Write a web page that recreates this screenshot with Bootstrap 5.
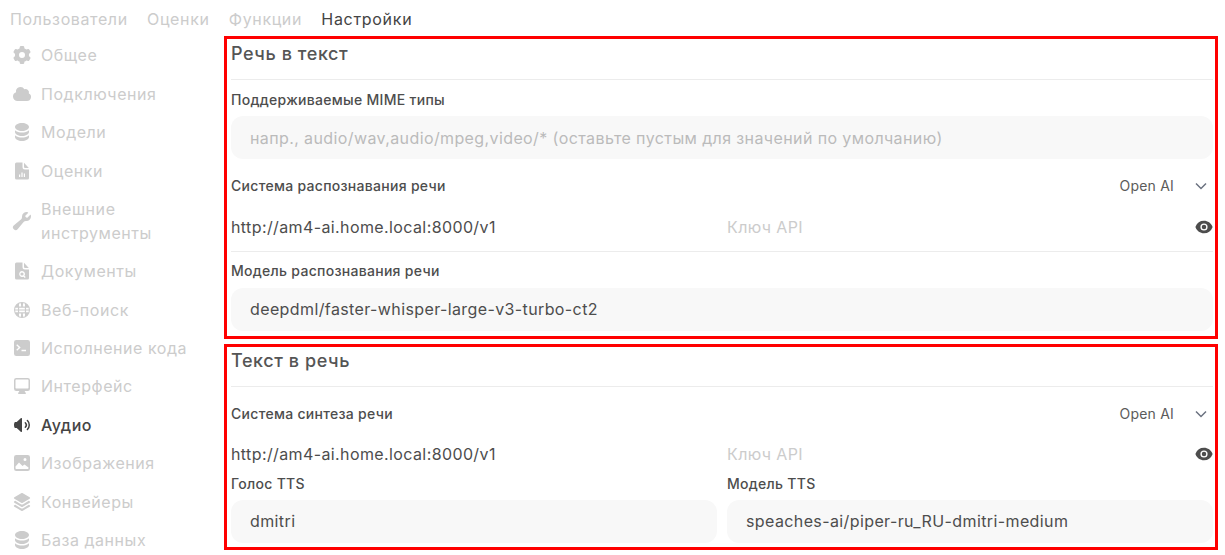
<!DOCTYPE html>
<html lang="ru">
<head>
  <meta charset="UTF-8" />
  <meta name="viewport" content="width=device-width, initial-scale=1" />
  <title>Настройки</title>
  <link href="https://cdn.jsdelivr.net/npm/bootstrap@5.3.3/dist/css/bootstrap.min.css" rel="stylesheet" />
  <style>
    html, body {
      height: 100%;
      overflow: hidden;
    }

    body {
      background: #fff;
      color: #4d4d4d;
      font-family: Inter, "Noto Sans", sans-serif;
      font-size: 16px;
      letter-spacing: .39px;
    }

    .shell {
      height: 555px;
      overflow: hidden;
    }

    .top-tabs {
      height: 36px;
      padding: 7px 0 0 10px;
      gap: 19.3px;
      line-height: 24px;
      color: #ccc;
      letter-spacing: .62px;
    }

    .top-tabs .is-on {
      color: #444;
      letter-spacing: .7px;
    }

    .side {
      width: 224px;
      flex: none;
      padding: .2px 0 0 12px;
      letter-spacing: .55px;
    }

    .side-item {
      display: flex;
      align-items: center;
      gap: 9px;
      padding: 7.2px 0;
      line-height: 24px;
      color: #ccc;
    }

    .side-item svg {
      width: 20px;
      height: 20px;
      flex: none;
      fill: currentColor;
    }

    .side-item.is-on {
      color: #444;
      font-weight: 500;
    }

    .red-box {
      width: 994px;
      border: 3px solid #f00;
      padding: 1px 2px 0 4px;
    }

    .box-a {
      height: 303px;
      margin-bottom: 5px;
    }

    .box-b {
      height: 206px;
      padding-top: 0;
    }

    .box-title {
      font-size: 18px;
      font-weight: 500;
      line-height: 28px;
      color: #555;
      letter-spacing: .58px;
    }

    .rule {
      height: 1px;
      background: #ececec;
    }

    .fld-label {
      font-size: 14px;
      font-weight: 450;
      line-height: 20px;
      color: #4d4d4d;
      letter-spacing: .29px;
    }

    .fld-box {
      height: 43px;
      line-height: 43px;
      padding: 0 19px;
      border-radius: 12px;
      background: #f8f8f8;
      color: #4d4d4d;
    }

    .fld-box.is-empty {
      line-height: 44px;
      color: #bbb;
    }

    .pick {
      font-size: 14px;
      color: #5b5b5b;
      letter-spacing: .2px;
    }

    .pick svg {
      width: 20px;
      height: 20px;
      margin: 0 2px 0 17px;
      stroke: #6b7280;
      fill: none;
      stroke-width: 1.5;
    }

    .url-row {
      line-height: 24px;
      gap: 10px;
    }

    .url-row > div {
      flex: 1 1 0;
    }

    .key-hint {
      color: #ccc;
    }

    .eye {
      width: 18px;
      height: 18px;
      fill: #4d4d4d;
    }

    .two-col {
      gap: 10px;
    }

    .two-col > div {
      flex: 1 1 0;
      min-width: 0;
    }

    .title-a { margin-bottom: 11px; }
    .title-b { margin-bottom: 11px; }
    .gap-lbl { margin-top: 10px; }
    .gap-lbl-m { margin-top: 9px; }
    .gap-box { margin-top: 6px; }
    .gap-pick { margin-top: 16px; }
    .gap-url { margin-top: 19px; }
    .gap-url-b { margin-top: 18px; }
    .gap-rule { margin-top: 12px; }
    .gap-cols { margin-top: 8px; }
    .gap-box2 { margin-top: 7px; }
    .gap-box3 { margin-top: 6px; }
  </style>
</head>
<body>
  <div class="shell">
    <div class="top-tabs d-flex">
      <span>Пользователи</span>
      <span>Оценки</span>
      <span>Функции</span>
      <span class="is-on">Настройки</span>
    </div>
    <div class="d-flex">
      <div class="side">
        <div class="side-item"><svg viewBox="0 0 20 20"><path fill-rule="evenodd" d="M7.84 1.804A1 1 0 0 1 8.82 1h2.36a1 1 0 0 1 .98.804l.331 1.652a6.993 6.993 0 0 1 1.929 1.115l1.598-.54a1 1 0 0 1 1.186.447l1.18 2.044a1 1 0 0 1-.205 1.251l-1.267 1.113a7.047 7.047 0 0 1 0 2.228l1.267 1.113a1 1 0 0 1 .206 1.25l-1.18 2.045a1 1 0 0 1-1.187.447l-1.598-.54a6.993 6.993 0 0 1-1.929 1.115l-.33 1.652a1 1 0 0 1-.98.804H8.82a1 1 0 0 1-.98-.804l-.331-1.652a6.993 6.993 0 0 1-1.929-1.115l-1.598.54a1 1 0 0 1-1.186-.447l-1.18-2.044a1 1 0 0 1 .205-1.251l1.267-1.114a7.05 7.05 0 0 1 0-2.227L1.821 7.773a1 1 0 0 1-.206-1.25l1.18-2.045a1 1 0 0 1 1.187-.447l1.598.54A6.992 6.992 0 0 1 7.51 3.456l.33-1.652ZM10 13a3 3 0 1 0 0-6 3 3 0 0 0 0 6Z"/></svg>Общее</div>
        <div class="side-item"><svg viewBox="0 0 20 20"><path d="M1 12.5A4.5 4.5 0 0 0 5.5 17H15a4 4 0 0 0 1.866-7.539 3.504 3.504 0 0 0-4.504-4.272A4.5 4.5 0 0 0 4.06 8.235 4.502 4.502 0 0 0 1 12.5Z"/></svg>Подключения</div>
        <div class="side-item"><svg viewBox="0 0 20 20"><path d="M10 1c3.866 0 7 1.79 7 4s-3.134 4-7 4-7-1.79-7-4 3.134-4 7-4Zm5.694 8.13c.464-.264.91-.583 1.306-.952V10c0 2.21-3.134 4-7 4s-7-1.79-7-4V8.178c.396.37.842.688 1.306.953C5.838 10.006 7.854 10.5 10 10.5s4.162-.494 5.694-1.37ZM3 13.179V15c0 2.21 3.134 4 7 4s7-1.79 7-4v-1.822c-.396.37-.842.688-1.306.953-1.532.875-3.548 1.369-5.694 1.369s-4.162-.494-5.694-1.37A7.009 7.009 0 0 1 3 13.179Z"/></svg>Модели</div>
        <div class="side-item"><svg viewBox="0 0 20 20"><path fill-rule="evenodd" d="M4.500 1.500A1.500 1.500 0 0 0 3 3v14a1.500 1.500 0 0 0 1.500 1.500h11A1.500 1.500 0 0 0 17 17V8.500h-4A2.500 2.500 0 0 1 10.500 6V1.500h-6ZM7 13.500h1.200V16H7v-2.500Zm2.400-2h1.200V16H9.400v-4.500Zm2.400 1H13V16h-1.200v-3.500Z"/><path d="M12 1.700V6a1 1 0 0 0 1 1h3.800L12 1.700Z"/></svg>Оценки</div>
        <div class="side-item"><svg viewBox="0 0 20 20"><path d="M19 5.5a4.5 4.5 0 0 1-4.791 4.49c-.873-.055-1.808.128-2.368.8l-6.024 7.23a2.724 2.724 0 1 1-3.837-3.837L9.21 8.16c.672-.56.855-1.495.8-2.368a4.5 4.5 0 0 1 5.873-4.575c.324.105.39.51.15.752L13.34 4.66a.455.455 0 0 0-.11.494 3.01 3.01 0 0 0 1.617 1.617c.17.07.363.02.493-.111l2.692-2.692c.241-.241.647-.174.752.15.14.435.216.9.216 1.382Z"/></svg><span>Внешние<br />инструменты</span></div>
        <div class="side-item"><svg viewBox="0 0 20 20"><path fill-rule="evenodd" d="M4.500 1.500A1.500 1.500 0 0 0 3 3v14a1.500 1.500 0 0 0 1.500 1.500h11A1.500 1.500 0 0 0 17 17V8.500h-4A2.500 2.500 0 0 1 10.500 6V1.500h-6ZM10 10a3 3 0 0 1 2.400 4.800l1.300 1.300-.9.9-1.300-1.300A3 3 0 1 1 10 10Zm0 1.400a1.600 1.600 0 1 0 0 3.200 1.600 1.600 0 0 0 0-3.200Z"/><path d="M12 1.700V6a1 1 0 0 0 1 1h3.800L12 1.700Z"/></svg>Документы</div>
        <div class="side-item"><svg viewBox="0 0 20 20"><path fill-rule="evenodd" d="M10 2a8 8 0 1 0 0 16 8 8 0 0 0 0-16ZM7.200 3.600 8.900 3.200 9.200 6.600H7a9 9 0 0 1 .2-3Zm3.900-.4 1.700.4c.2 1 .3 2 .2 3h-2.200l.3-3.400ZM3.400 7.800H6L5.900 9.400H3.200l.2-1.600Zm3.800 0h5.600l.1 1.600H7.100l.1-1.600Zm6.800 0h2.600l.2 1.600h-2.700L14 7.800ZM3.200 10.600h2.700l.1 1.600H3.400l-.2-1.600Zm3.900 0h5.800l-.1 1.600H7.200l-.1-1.600Zm7 0h2.700l-.2 1.600H14l.1-1.600ZM7 13.400h2.200l-.3 3.400-1.700-.4a9 9 0 0 1-.2-3Zm3.800 0H13c.1 1 0 2-.2 3l-1.700.4-.3-3.400Z"/></svg>Веб-поиск</div>
        <div class="side-item"><svg viewBox="0 0 20 20"><path fill-rule="evenodd" d="M4.250 2A2.250 2.250 0 0 0 2 4.250v11.500A2.250 2.250 0 0 0 4.250 18h11.500A2.250 2.250 0 0 0 18 15.750V4.250A2.250 2.250 0 0 0 15.750 2H4.250Zm.9 4.300 3.500 3.200-3.500 3.200-.9-1 2.400-2.200-2.400-2.200.9-1ZM9.500 11.800h4.500v1.400H9.500v-1.400Z"/></svg>Исполнение кода</div>
        <div class="side-item"><svg viewBox="0 0 20 20"><path fill-rule="evenodd" d="M2 4.250A2.250 2.250 0 0 1 4.250 2h11.500A2.250 2.250 0 0 1 18 4.250v8.500A2.250 2.250 0 0 1 15.750 15h-3.105a3.501 3.501 0 0 0 1.100 1.677A.75.75 0 0 1 13.260 18H6.740a.75.75 0 0 1-.484-1.323A3.501 3.501 0 0 0 7.355 15H4.250A2.250 2.250 0 0 1 2 12.750v-8.500Zm1.500 0a.75.75 0 0 1 .75-.75h11.500a.75.75 0 0 1 .75.75v7.500a.75.75 0 0 1-.75.75H4.250a.75.75 0 0 1-.75-.75v-7.500Z"/></svg>Интерфейс</div>
        <div class="side-item is-on"><svg viewBox="0 0 20 20"><path d="M10 3.750a.75.75 0 0 0-1.264-.546L4.703 7H3.167a.75.75 0 0 0-.7.48A6.985 6.985 0 0 0 2 10c0 .887.165 1.737.468 2.520.111.29.39.48.7.48h1.535l4.033 3.796A.75.75 0 0 0 10 16.250V3.750ZM15.950 5.050a.75.75 0 0 0-1.060 1.061 5.500 5.500 0 0 1 0 7.778.75.75 0 0 0 1.060 1.060 7 7 0 0 0 0-9.899Z"/><path d="M13.829 7.172a.75.75 0 0 0-1.061 1.060 2.500 2.500 0 0 1 0 3.536.75.75 0 0 0 1.060 1.060 4 4 0 0 0 0-5.656Z"/></svg>Аудио</div>
        <div class="side-item"><svg viewBox="0 0 20 20"><path fill-rule="evenodd" d="M4.250 2A2.250 2.250 0 0 0 2 4.250v11.500A2.250 2.250 0 0 0 4.250 18h11.500A2.250 2.250 0 0 0 18 15.750V4.250A2.250 2.250 0 0 0 15.750 2H4.250ZM13 5a1.500 1.500 0 1 1 0 3 1.500 1.500 0 0 1 0-3ZM3.500 13.500l3.500-4 3.500 3.500 2-1.500 4 3v.75a.75.75 0 0 1-.75.75H4.250a.75.75 0 0 1-.75-.75V13.500Z"/></svg>Изображения</div>
        <div class="side-item"><svg viewBox="0 0 20 20"><path d="M3.196 12.870l-.825.483a.75.75 0 0 0 0 1.294l7.250 4.250a.75.75 0 0 0 .758 0l7.250-4.250a.75.75 0 0 0 0-1.294l-.825-.484-5.666 3.322a2.250 2.250 0 0 1-2.276 0L3.196 12.870Z"/><path d="M3.196 8.870l-.825.483a.75.75 0 0 0 0 1.294l7.250 4.250a.75.75 0 0 0 .758 0l7.250-4.250a.75.75 0 0 0 0-1.294l-.825-.484-5.666 3.322a2.250 2.250 0 0 1-2.276 0L3.196 8.870Z"/><path d="M10.380 1.103a.75.75 0 0 0-.76 0l-7.250 4.250a.75.75 0 0 0 0 1.294l7.250 4.250a.75.75 0 0 0 .76 0l7.250-4.250a.75.75 0 0 0 0-1.294l-7.250-4.250Z"/></svg>Конвейеры</div>
        <div class="side-item"><svg viewBox="0 0 20 20"><path d="M10 1c3.866 0 7 1.79 7 4s-3.134 4-7 4-7-1.79-7-4 3.134-4 7-4Zm5.694 8.13c.464-.264.91-.583 1.306-.952V10c0 2.21-3.134 4-7 4s-7-1.79-7-4V8.178c.396.37.842.688 1.306.953C5.838 10.006 7.854 10.5 10 10.5s4.162-.494 5.694-1.37ZM3 13.179V15c0 2.21 3.134 4 7 4s7-1.79 7-4v-1.822c-.396.37-.842.688-1.306.953-1.532.875-3.548 1.369-5.694 1.369s-4.162-.494-5.694-1.37A7.009 7.009 0 0 1 3 13.179Z"/></svg>База данных</div>
      </div>

      <div>
        <div class="red-box box-a">
          <div class="box-title title-a">Речь в текст</div>
          <div class="rule"></div>
          <div class="fld-label gap-lbl">Поддерживаемые MIME типы</div>
          <div class="fld-box is-empty gap-box">напр., audio/wav,audio/mpeg,video/* (оставьте пустым для значений по умолчанию)</div>
          <div class="d-flex justify-content-between align-items-center gap-pick">
            <div class="fld-label">Система распознавания речи</div>
            <div class="pick d-flex align-items-center">Open AI<svg viewBox="0 0 20 20"><path d="M5 7.500l5 5 5-5" /></svg></div>
          </div>
          <div class="url-row d-flex gap-url">
            <div>http://am4-ai.home.local:8000/v1</div>
            <div class="d-flex justify-content-between align-items-center">
              <span class="key-hint">Ключ API</span>
              <svg class="eye" viewBox="0 0 20 20"><path d="M10 12.500a2.500 2.500 0 1 0 0-5 2.500 2.500 0 0 0 0 5Z"/><path fill-rule="evenodd" d="M.664 10.590a1.651 1.651 0 0 1 0-1.186A10.004 10.004 0 0 1 10 3c4.257 0 7.893 2.660 9.336 6.410.147.381.146.804 0 1.186A10.004 10.004 0 0 1 10 17c-4.257 0-7.893-2.660-9.336-6.410ZM14 10a4 4 0 1 1-8 0 4 4 0 0 1 8 0Z"/></svg>
            </div>
          </div>
          <div class="rule gap-rule"></div>
          <div class="fld-label gap-lbl-m">Модель распознавания речи</div>
          <div class="fld-box gap-box2">deepdml/faster-whisper-large-v3-turbo-ct2</div>
        </div>

        <div class="red-box box-b">
          <div class="box-title title-b">Текст в речь</div>
          <div class="rule"></div>
          <div class="d-flex justify-content-between align-items-center gap-pick">
            <div class="fld-label">Система синтеза речи</div>
            <div class="pick d-flex align-items-center">Open AI<svg viewBox="0 0 20 20"><path d="M5 7.500l5 5 5-5" /></svg></div>
          </div>
          <div class="url-row d-flex gap-url-b">
            <div>http://am4-ai.home.local:8000/v1</div>
            <div class="d-flex justify-content-between align-items-center">
              <span class="key-hint">Ключ API</span>
              <svg class="eye" viewBox="0 0 20 20"><path d="M10 12.500a2.500 2.500 0 1 0 0-5 2.500 2.500 0 0 0 0 5Z"/><path fill-rule="evenodd" d="M.664 10.590a1.651 1.651 0 0 1 0-1.186A10.004 10.004 0 0 1 10 3c4.257 0 7.893 2.660 9.336 6.410.147.381.146.804 0 1.186A10.004 10.004 0 0 1 10 17c-4.257 0-7.893-2.660-9.336-6.410ZM14 10a4 4 0 1 1-8 0 4 4 0 0 1 8 0Z"/></svg>
            </div>
          </div>
          <div class="two-col d-flex gap-cols">
            <div>
              <div class="fld-label">Голос TTS</div>
              <div class="fld-box gap-box3">dmitri</div>
            </div>
            <div>
              <div class="fld-label">Модель TTS</div>
              <div class="fld-box gap-box3">speaches-ai/piper-ru_RU-dmitri-medium</div>
            </div>
          </div>
        </div>
      </div>
    </div>
  </div>

  <script src="https://cdn.jsdelivr.net/npm/bootstrap@5.3.3/dist/js/bootstrap.bundle.min.js"></script>
</body>
</html>
